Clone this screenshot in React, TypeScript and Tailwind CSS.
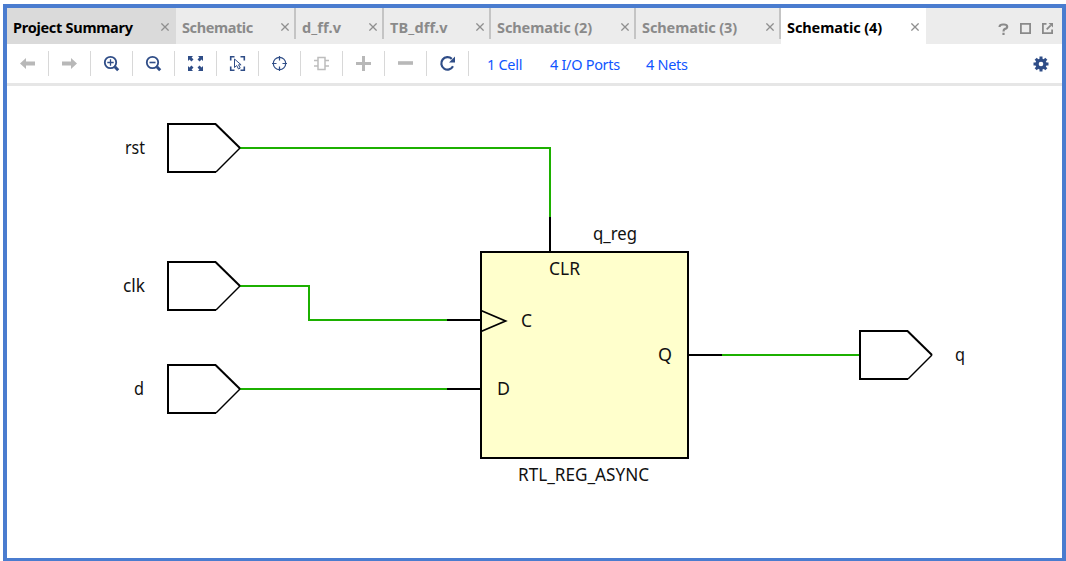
import React from "react";

type Tab = { label: string; width: string; tracking: string; state: string; sep: boolean };

const idle = "bg-[#ececec] text-[#8a8a8a]";

const tabs: Tab[] = [
  { label: "Project Summary", width: "w-[169px]", tracking: "tracking-[-0.28px]", state: "bg-[#dadada] text-black", sep: false },
  { label: "Schematic", width: "w-[120px]", tracking: "tracking-[-0.4px]", state: idle, sep: true },
  { label: "d_ff.v", width: "w-[88px]", tracking: "tracking-[0.1px]", state: idle, sep: true },
  { label: "TB_dff.v", width: "w-[107px]", tracking: "tracking-[0.15px]", state: idle, sep: true },
  { label: "Schematic (2)", width: "w-[145px]", tracking: "tracking-[-0.1px]", state: idle, sep: true },
  { label: "Schematic (3)", width: "w-[145px]", tracking: "tracking-[-0.1px]", state: idle, sep: true },
  { label: "Schematic (4)", width: "w-[145px]", tracking: "tracking-[-0.1px]", state: "bg-white text-black", sep: false },
];

function Close() {
  return (
    <svg width="8" height="8" viewBox="0 0 8 8" fill="none" stroke="#8f8f8f" strokeWidth="1.3">
      <path d="M.4.4l7.2 7.2M7.600.4L.4 7.600" />
    </svg>
  );
}

const navy = "#2f4d87";

const icons: React.ReactNode[] = [
  <path key="b" fill="#b8b8b8" d="M3 10.500L9 5v3.500h9v4H9V16z" />,
  <path key="f" fill="#b8b8b8" d="M18 10.500L12 5v3.500H3v4h9V16z" />,
  <g key="zi" fill="none" stroke={navy}>
    <circle cx="9.500" cy="9.500" r="5.700" strokeWidth="1.800" />
    <path d="M6.300 9.500h6.400M9.500 6.300v6.400" strokeWidth="1.300" />
    <path d="M13.800 13.800l3.400 3.400" strokeWidth="3" />
  </g>,
  <g key="zo" fill="none" stroke={navy}>
    <circle cx="9.500" cy="9.500" r="5.700" strokeWidth="1.800" />
    <path d="M6.500 9.500h6" strokeWidth="1.600" />
    <path d="M13.800 13.800l3.400 3.400" strokeWidth="3" />
  </g>,
  <g key="fit" fill={navy}>
    <path d="M3 3h5L6.600 4.500 8.500 6.400 6.400 8.500 4.500 6.600 3 8zM18 3h-5l1.400 1.500-1.900 1.900 2.100 2.100 1.900-1.900L18 8zM3 18h5l-1.400-1.500 1.900-1.900-2.100-2.100-1.900 1.900L3 13zM18 18h-5l1.400-1.500-1.900-1.900 2.100-2.100 1.900 1.900L18 13z" />
  </g>,
  <g key="sel" fill="none" stroke={navy}>
    <path d="M3.700 7.500V3.700h3.800M13.500 3.700h3.800v3.800M17.300 13.500v3.800h-3.800M7.500 17.300H3.700v-3.800" strokeWidth="1.600" />
    <path d="M7.500 6v8.500l2.200-2 1.800 3.500 1.700-.9-1.700-3.300h2.600z" strokeWidth="1" />
  </g>,
  <g key="target" fill="none" stroke={navy}>
    <circle cx="10.500" cy="10.500" r="6.200" strokeWidth="1.200" />
    <path d="M10.500 3v4.500M10.500 13.500V18M3 10.500h4.500M13.500 10.500H18" strokeWidth="1.200" />
  </g>,
  <g key="chip" fill="none" stroke="#bdbdbd" strokeWidth="1.500">
    <path d="M7 4.500h7v12H7zM3 7.500h4M3 13h4M14 7.500h4M14 13h4" />
  </g>,
  <path key="plus" d="M3 10.500h15M10.500 3v15" stroke="#b8b8b8" strokeWidth="3" />,
  <path key="minus" d="M3 10h15" stroke="#b8b8b8" strokeWidth="3.600" />,
  <g key="refresh">
    <path d="M16 13.300a6.200 6.200 0 1 1-1.200-7.400" fill="none" stroke={navy} strokeWidth="2.200" />
    <path d="M18 3.500v6h-6z" fill={navy} />
  </g>,
];

function Port({ x, y }: { x: number; y: number }) {
  return (
    <g transform={`translate(${x} ${y})`} fill="none" stroke="#000">
      <path d="M49 49H1V1h48" strokeWidth="2" />
      <path d="M48.500 1L73 25" strokeWidth="2" />
      <path d="M73 25L49 49" strokeWidth="1.400" />
    </g>
  );
}

const labels: [string, number, number, number][] = [
  ["rst", 125, 154, 20],
  ["clk", 123, 292, 22],
  ["d", 134, 395, 10],
  ["q_reg", 593, 240, 44],
  ["CLR", 549, 275, 31],
  ["C", 521, 327, 11],
  ["D", 497, 395, 13],
  ["Q", 658, 361, 14],
  ["RTL_REG_ASYNC", 518, 481, 131],
  ["q", 955, 361, 10],
];

function Schematic() {
  return (
    <svg className="block h-[472px] w-[1055px]" viewBox="7 86 1055 472">
      <path d="M240 148H550V218M240 286H309V320H448M240 389H448M721 355H860" fill="none" stroke="#1cb000" strokeWidth="2" />
      <rect x="481" y="252" width="207" height="206" fill="#ffffcc" stroke="#000" strokeWidth="2" />
      <path d="M550 217V252M447 320H481M447 389H481M688 355H722" stroke="#000" strokeWidth="2" fill="none" />
      <path d="M481 310.500L505.500 321 481 331.500" stroke="#000" strokeWidth="1.800" fill="none" />
      <Port x={167} y={123} />
      <Port x={167} y={261} />
      <Port x={167} y={364} />
      <Port x={859} y={330} />
      <g fill="#111" className="font-['Noto_Sans',sans-serif] text-[17.5px]">
        {labels.map(([t, x, y, w]) => (
          <text key={t} x={x} y={y} textLength={w} lengthAdjust="spacingAndGlyphs">
            {t}
          </text>
        ))}
      </g>
    </svg>
  );
}

export default function App() {
  return (
    <div className="h-[561px] w-[1066px] overflow-hidden bg-white pt-[4px] pl-[3px] font-['Noto_Sans',sans-serif]">
      <div className="flex h-[557px] w-[1063px] flex-col border-x-4 border-t-4 border-b-[3px] border-[#4a7ccf] bg-white">
        <div className="flex h-[36px] shrink-0 bg-[#ececec]">
          {tabs.map((t) => (
            <div key={t.label} className={`flex shrink-0 ${t.width} ${t.state}`}>
              <div className="flex h-[38px] min-w-0 grow items-center justify-between pr-[7px] pl-[6px]">
                <span className={`text-[14.5px] leading-[22px] font-bold whitespace-nowrap ${t.tracking}`}>{t.label}</span>
                <Close />
              </div>
              {t.sep ? <div className="-ml-[2px] h-[31px] w-[2px] bg-[#c4c4c4]" /> : null}
            </div>
          ))}
          <div className="flex grow items-center justify-end gap-[11px] pt-[5px] pr-[9px]">
            <svg width="11" height="12" viewBox="0 0 11 12" fill="none" stroke="#8a8a8a" strokeWidth="2.200">
              <path d="M1.600 4V3.500Q1.800 1.500 5 1.500h1Q9.200 1.500 9.200 3.700 9.200 5.300 7 5.900 5.500 6.400 5.500 8.500M5.500 9.800V12" />
            </svg>
            <svg width="11" height="11" viewBox="0 0 11 11" fill="none" stroke="#8a8a8a" strokeWidth="1.800">
              <path d="M.9.9h9.200v9.200H.9z" />
            </svg>
            <svg width="11" height="11" viewBox="0 0 11 11">
              <path d="M4.500.9H.9v9.200h9.200V6.500M4.700 6.300l4-4" fill="none" stroke="#8a8a8a" strokeWidth="1.800" />
              <path d="M6.500 0H11v4.500z" fill="#8a8a8a" />
            </svg>
          </div>
        </div>
        <div className="flex h-[42px] shrink-0 border-b-3 border-[#e6e6e6] bg-white">
          {icons.map((icon, i) => (
            <div key={i} className="flex h-[39px] w-[42px] items-center">
              <div className="flex grow justify-center">
                <svg width="21" height="21" viewBox="0 0 21 21">
                  {icon}
                </svg>
              </div>
              <div className="h-[25px] w-px bg-[#d8d8d8]" />
            </div>
          ))}
          <div className="flex grow items-center pt-[3px] pl-[18px] text-[14.5px] tracking-[-0.3px] text-[#0f55ff]">
            <span className="w-[63px] whitespace-nowrap">1 Cell</span>
            <span className="w-[96px] whitespace-nowrap">4 I/O Ports</span>
            <span className="whitespace-nowrap">4 Nets</span>
          </div>
          <div className="flex items-center pr-[13px]">
            <svg width="16" height="16" viewBox="-8 -8 16 16">
              <g fill={navy}>
                <path d="M-1.500-7.500h3v15h-3z" />
                <path d="M-1.500-7.500h3v15h-3z" transform="rotate(45)" />
                <path d="M-1.500-7.500h3v15h-3z" transform="rotate(90)" />
                <path d="M-1.500-7.500h3v15h-3z" transform="rotate(135)" />
                <circle r="5.600" />
              </g>
              <circle r="2.300" fill="#fff" />
            </svg>
          </div>
        </div>
        <Schematic />
      </div>
    </div>
  );
}
